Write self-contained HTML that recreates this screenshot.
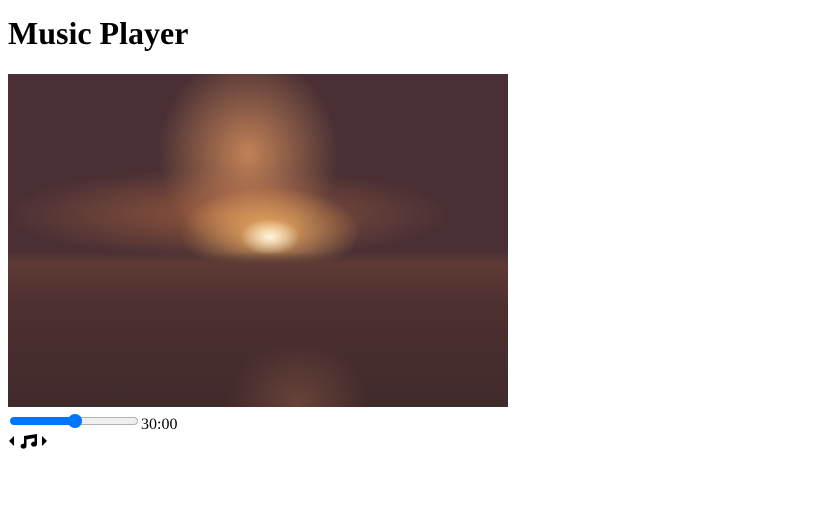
<!DOCTYPE html>
<html><head><style>
body{margin:8px;font-family:"Liberation Serif",serif;background:#fff}
h1{font-size:32px;margin:0;padding-top:12px;height:54px;line-height:44px;position:relative;top:-9px}
.img{position:absolute;left:8px;top:74px;width:500px;height:333px;background:
radial-gradient(ellipse 30px 18px at 262px 163px,#fff6dc,rgba(255,230,170,0) 100%),
radial-gradient(ellipse 90px 45px at 262px 158px,rgba(245,180,100,.9),rgba(240,170,90,0) 100%),
radial-gradient(ellipse 90px 100px at 240px 80px,rgba(225,150,95,.8),rgba(225,150,90,0) 100%),
radial-gradient(ellipse 220px 45px at 220px 140px,rgba(190,110,65,.6),rgba(180,100,60,0) 100%),
linear-gradient(#4a3035 0,#4a3035 100%);overflow:hidden}
.crowd{position:absolute;left:0;right:0;top:178px;bottom:0;background:
radial-gradient(ellipse 70px 60px at 290px 150px,rgba(140,90,70,.5),rgba(0,0,0,0)),
linear-gradient(rgba(94,58,52,0) 0,#5e3a34 12px,#4d3030 35%,#412a2b 100%)}
.slider{position:absolute;left:10px;top:417px;width:128px;height:8px;border:1px solid #b2b2b2;border-radius:5px;background:#efefef;box-sizing:border-box}
.fill{position:absolute;left:10px;top:417px;width:66px;height:8px;background:#0075ff;border-radius:5px}
.thumb{position:absolute;left:68px;top:414px;width:14px;height:14px;border-radius:50%;background:#0075ff}
.t{position:absolute;left:141px;top:415px;font-size:16px;line-height:19px}
</style></head><body>
<h1>Music Player</h1>
<div class="img"><div class="crowd"></div></div>
<div class="slider"></div><div class="fill"></div><div class="thumb"></div>
<div class="t">30:00</div>
<svg style="position:absolute;left:7px;top:433px" width="44" height="16" viewBox="0 0 44 16">
<path d="M7 3 L2 8 L7 13 Z" fill="#000"/>
<path d="M17 3 L30 1 L30 11 A3 2.5 0 1 1 27.5 8.7 L27.5 5 L19.5 6.5 L19.5 13 A3 2.5 0 1 1 17 10.7 Z" fill="#000"/>
<path d="M35 3 L40 8 L35 13 Z" fill="#000"/>
</svg>
</body></html>
